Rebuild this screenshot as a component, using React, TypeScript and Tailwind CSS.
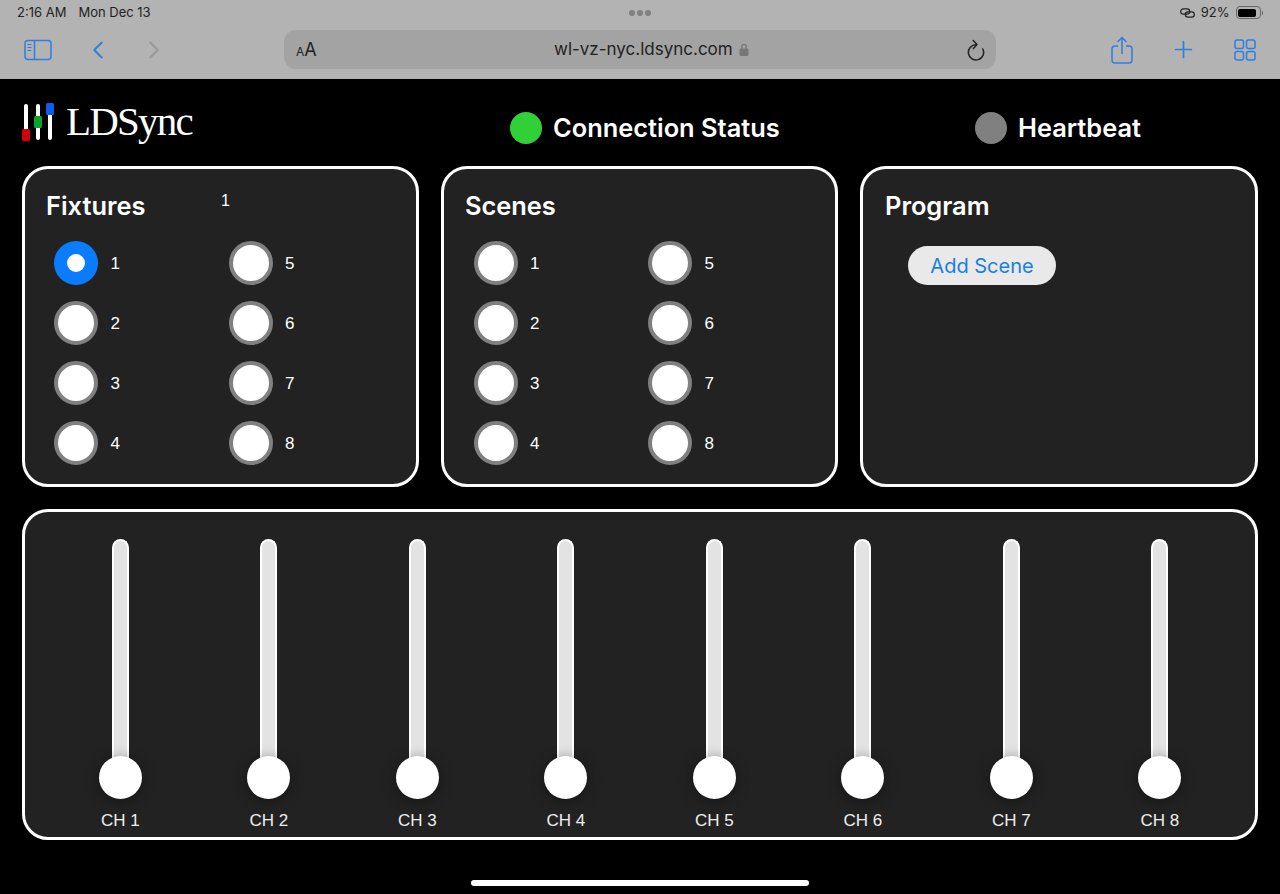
import { ChevronLeft, ChevronRight, Plus } from "lucide-react";

const CHANNELS = ["CH 1", "CH 2", "CH 3", "CH 4", "CH 5", "CH 6", "CH 7", "CH 8"];
const NUMBERS = [1, 5, 2, 6, 3, 7, 4, 8];

function SidebarIcon() {
  return (
    <svg width="28" height="22" viewBox="0 0 28 22" fill="none" stroke="#2f7fdc" strokeWidth="1.5">
      <rect x="1" y="1.5" width="26" height="19" rx="3" />
      <path d="M10.5 1.5v19" />
      <path d="M3.5 5.5h4M3.5 8.5h4M3.5 11.5h4" strokeWidth="1.2" />
    </svg>
  );
}

function ShareIcon() {
  return (
    <svg width="22" height="28" viewBox="0 0 22 28" fill="none" stroke="#2f7fdc" strokeWidth="1.5">
      <path d="M7 10H4a3 3 0 0 0-3 3v11a3 3 0 0 0 3 3h14a3 3 0 0 0 3-3V13a3 3 0 0 0-3-3h-3" />
      <path d="M11 18V2M6.5 6L11 1.5 15.5 6" />
    </svg>
  );
}

function TabsIcon() {
  return (
    <svg width="22" height="22" viewBox="0 0 22 22" fill="none" stroke="#2f7fdc" strokeWidth="1.5">
      <rect x="1" y="1" width="8.5" height="8.5" rx="2" />
      <rect x="12.5" y="1" width="8.5" height="8.5" rx="2" />
      <rect x="1" y="12.5" width="8.5" height="8.5" rx="2" />
      <rect x="12.5" y="12.5" width="8.5" height="8.5" rx="2" />
    </svg>
  );
}

function ReloadIcon() {
  return (
    <svg width="20" height="22" viewBox="0 0 20 22" fill="none" stroke="#222" strokeWidth="1.5" strokeLinecap="round" strokeLinejoin="round">
      <path d="M10 5.8a7.6 7.6 0 1 0 6.8 4.2" />
      <path d="M7.2 1.5L11 5.6 7.4 9.6" />
    </svg>
  );
}

function LinkIcon() {
  return (
    <svg width="15" height="10" viewBox="0 0 15 10" fill="none" stroke="#222" strokeWidth="1.2">
      <rect x="0.7" y="0.8" width="9" height="5.4" rx="2.7" />
      <rect x="5.3" y="3.8" width="9" height="5.4" rx="2.7" />
    </svg>
  );
}

function LockIcon() {
  return (
    <svg width="10" height="13" viewBox="0 0 10 13" fill="#777">
      <path d="M2.8 6V3.6a2.2 2.2 0 0 1 4.4 0V6" fill="none" stroke="#777" strokeWidth="1.2" />
      <rect x="0.5" y="5.5" width="9" height="7.5" rx="1.4" />
    </svg>
  );
}

function Battery() {
  return (
    <div className="flex items-center gap-[1px]">
      <div className="h-[13px] w-[25px] rounded-[4px] border border-[#666] p-[1.5px]">
        <div className="h-full w-[92%] rounded-[2px] bg-black" />
      </div>
      <div className="h-[4px] w-[1.5px] rounded-r-sm bg-[#666]" />
    </div>
  );
}

function BrowserBar() {
  return (
    <div className="h-[79px] bg-[#b3b3b3] font-['Inter',sans-serif]">
      <div className="flex h-[25px] items-center justify-between pl-[17px] pr-[17px] text-[13px] text-[#222]">
        <div className="flex w-[200px] gap-3">
          <span>2:16 AM</span>
          <span>Mon Dec 13</span>
        </div>
        <div className="flex gap-[2px]">
          <span className="h-[6px] w-[6px] rounded-full bg-[#808080]" />
          <span className="h-[6px] w-[6px] rounded-full bg-[#808080]" />
          <span className="h-[6px] w-[6px] rounded-full bg-[#808080]" />
        </div>
        <div className="flex w-[200px] items-center justify-end gap-[6px]">
          <LinkIcon />
          <span>92%</span>
          <Battery />
        </div>
      </div>
      <div className="mt-[5px] flex items-center pl-[24px] pr-[24px]">
        <SidebarIcon />
        <ChevronLeft size={30} strokeWidth={1.6} className="ml-[31px] text-[#2f7fdc]" />
        <ChevronRight size={30} strokeWidth={1.6} className="ml-[26px] text-[#999]" />
        <div className="ml-[115px] flex h-[39px] w-[712px] items-center justify-between rounded-[12px] bg-[#a3a3a3] pl-[12px] pr-[10px] text-[#222]">
          <span className="text-[18px] leading-none">
            <span className="text-[12px]">A</span>A
          </span>
          <div className="ml-[20px] flex items-center gap-[6px] text-[17px]">
            <span>wl-vz-nyc.ldsync.com</span>
            <LockIcon />
          </div>
          <ReloadIcon />
        </div>
        <div className="ml-[115px]">
          <ShareIcon />
        </div>
        <Plus size={27} strokeWidth={1.5} className="ml-[37px] text-[#2f7fdc]" />
        <div className="ml-[37px]">
          <TabsIcon />
        </div>
      </div>
    </div>
  );
}

function Logo() {
  return (
    <div className="flex w-[488px] items-start gap-[9px] pt-[24px]">
      <svg width="35" height="38" viewBox="0 0 35 38">
        <rect x="2" y="1" width="4" height="36" rx="2" fill="#fff" />
        <rect x="14" y="1" width="4" height="36" rx="2" fill="#fff" />
        <rect x="26" y="1" width="4" height="36" rx="2" fill="#fff" />
        <rect x="0" y="26" width="8" height="12" rx="1.5" fill="#d3000c" />
        <rect x="12" y="13" width="8" height="12" rx="1.5" fill="#0ba52b" />
        <rect x="24" y="0" width="8" height="12" rx="1.5" fill="#0b5ff0" />
      </svg>
      <span className="-mt-[2px] font-['Liberation_Serif',serif] text-[41px] leading-[41px] tracking-[-1.8px] text-white">LDSync</span>
    </div>
  );
}

function Status({ color, label, width }: { color: string; label: string; width: string }) {
  return (
    <div className={`flex items-center gap-[11px] pt-[32px] ${width}`}>
      <span className={`h-[32px] w-[32px] rounded-full ${color}`} />
      <span className="mt-[1px] font-['Inter',sans-serif] text-[25.4px] font-semibold leading-[32px] text-white">{label}</span>
    </div>
  );
}

function Radio({ n, checked }: { n: number; checked?: boolean }) {
  return (
    <div className="flex items-center gap-[12.5px]">
      {checked ? (
        <span className="flex h-[44px] w-[44px] items-center justify-center rounded-full bg-[#0a7cff]">
          <span className="h-[18px] w-[18px] rounded-full bg-white" />
        </span>
      ) : (
        <span className="h-[44px] w-[44px] rounded-full border-[4px] border-[#808080] bg-white" />
      )}
      <span className="mt-[1px] font-['Liberation_Sans',sans-serif] text-[17px] text-white">{n}</span>
    </div>
  );
}

function RadioGrid({ selected, indent }: { selected?: number; indent: string }) {
  return (
    <div className={`mt-[19px] grid w-[350px] grid-cols-[174.5px_1fr] gap-y-[16px] ${indent}`}>
      {NUMBERS.map((n) => (
        <Radio key={n} n={n} checked={n === selected} />
      ))}
    </div>
  );
}

function Panel({ title, pad, note, children }: { title: string; pad: string; note?: string; children?: React.ReactNode }) {
  return (
    <section className={`h-[321px] flex-1 rounded-[26px] border-[3px] border-white bg-[#222222] pt-[21px] ${pad}`}>
      <div className="flex h-[32px] items-center">
        <h2 className="w-[175px] font-['Inter',sans-serif] text-[25.4px] font-semibold leading-[32px] text-white">{title}</h2>
        {note && <span className="mb-[10px] font-['Liberation_Sans',sans-serif] text-[16px] text-white">{note}</span>}
      </div>
      {children}
    </section>
  );
}

function Fader({ label }: { label: string }) {
  return (
    <div className="flex flex-col items-center">
      <div className="h-[222px] w-[17px] rounded-t-full border-x-[2px] border-t-[2px] border-white bg-[#e3e3e3]" />
      <span className="-mt-[5px] h-[43px] w-[43px] rounded-full bg-white shadow-[0_2px_14px_rgba(0,0,0,0.4)]" />
      <span className="mt-[12px] font-['Liberation_Sans',sans-serif] text-[17px] leading-[20px] text-[#eeeeee]">{label}</span>
    </div>
  );
}

export default function App() {
  return (
    <div className="relative h-[894px] w-[1280px] overflow-hidden bg-black">
      <BrowserBar />
      <div className="px-[22px]">
        <header className="flex h-[87px] items-start">
          <Logo />
          <Status color="bg-[#31d037]" label="Connection Status" width="w-[465px]" />
          <Status color="bg-[#808080]" label="Heartbeat" width="" />
        </header>
        <div className="flex gap-[22px]">
          <Panel title="Fixtures" pad="pl-[21px]" note="1">
            <RadioGrid selected={1} indent="ml-[8px]" />
          </Panel>
          <Panel title="Scenes" pad="pl-[21px]">
            <RadioGrid indent="ml-[8.5px]" />
          </Panel>
          <Panel title="Program" pad="pl-[22px]">
            <button
              type="button"
              className="ml-[23px] mt-[24px] h-[39px] w-[148px] rounded-full bg-[#e9e9e9] font-['Inter',sans-serif] text-[20px] text-[#1a7ee0]"
            >
              Add Scene
            </button>
          </Panel>
        </div>
        <section className="mt-[22px] grid h-[331px] grid-cols-8 rounded-[26px] border-[3px] border-white bg-[#222222] px-[21px] pt-[27px]">
          {CHANNELS.map((ch) => (
            <Fader key={ch} label={ch} />
          ))}
        </section>
      </div>
      <div className="absolute bottom-[8px] left-[471px] h-[6px] w-[338px] rounded-full bg-white" />
    </div>
  );
}
